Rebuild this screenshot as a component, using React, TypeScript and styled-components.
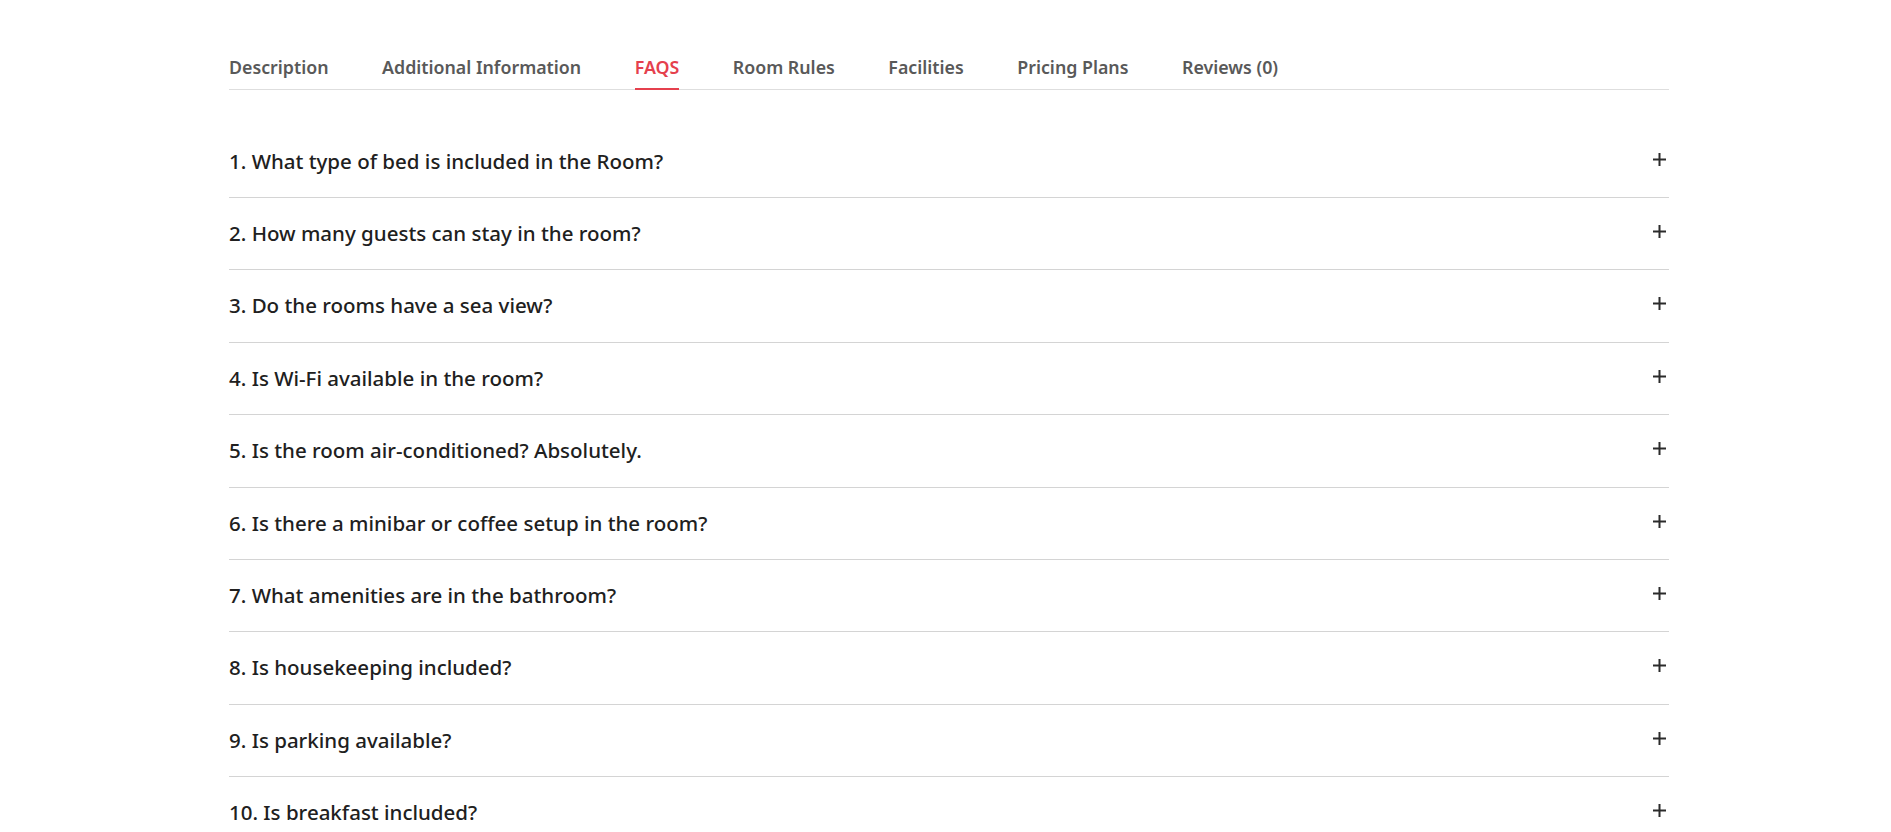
import React, { useState } from "react";
import styled, { createGlobalStyle } from "styled-components";

const GlobalStyle = createGlobalStyle`
  html, body { margin: 0; padding: 0; background: #ffffff; }
  body { font-family: "Noto Sans", "Open Sans", sans-serif; }
  * { box-sizing: border-box; }
`;

const Page = styled.main`
  display: flex;
  flex-direction: column;
  width: 1440px;
  margin-left: 229px;
  padding-top: 55px;
`;

const TabList = styled.nav`
  display: flex;
  gap: 53.5px;
  border-bottom: 1px solid #dedede;
`;

const Tab = styled.button<{ $active?: boolean }>`
  appearance: none;
  background: none;
  border: none;
  border-bottom: 2px solid ${(p) => (p.$active ? "#e5404d" : "transparent")};
  margin: 0 0 -1px 0;
  padding: 0 0 9px 0;
  font-family: "Noto Sans", "Open Sans", sans-serif;
  font-size: 17.8px;
  line-height: 24px;
  font-weight: 600;
  color: ${(p) => (p.$active ? "#e5404d" : "#595959")};
  cursor: pointer;
`;

const Accordion = styled.section`
  display: flex;
  flex-direction: column;
  margin-top: 35.6px;
`;

const Item = styled.div`
  border-bottom: 1px solid #d4d4d4;
`;

const Question = styled.button`
  appearance: none;
  background: none;
  border: none;
  width: 100%;
  display: flex;
  align-items: flex-start;
  justify-content: space-between;
  padding: 22px 0;
  text-align: left;
  cursor: pointer;
`;

const QuestionText = styled.span`
  font-family: "Noto Sans", "Open Sans", sans-serif;
  font-size: 20.5px;
  line-height: 27.4px;
  font-weight: 500;
  color: #202020;
`;

const PlusIcon = styled.svg`
  width: 13px;
  height: 13px;
  margin-top: 5px;
  margin-right: 3px;
  flex-shrink: 0;
`;

const Answer = styled.p`
  margin: 0 0 22px;
  font-family: "Noto Sans", "Open Sans", sans-serif;
  font-size: 16px;
  line-height: 26px;
  color: #666;
`;

const tabs = [
  "Description",
  "Additional Information",
  "FAQS",
  "Room Rules",
  "Facilities",
  "Pricing Plans",
  "Reviews (0)",
];

const faqs = [
  "1. What type of bed is included in the Room?",
  "2. How many guests can stay in the room?",
  "3. Do the rooms have a sea view?",
  "4. Is Wi-Fi available in the room?",
  "5. Is the room air-conditioned? Absolutely.",
  "6. Is there a minibar or coffee setup in the room?",
  "7. What amenities are in the bathroom?",
  "8. Is housekeeping included?",
  "9. Is parking available?",
  "10. Is breakfast included?",
];

export default function App() {
  const [active, setActive] = useState("FAQS");
  const [open, setOpen] = useState<number | null>(null);
  return (
    <>
      <GlobalStyle />
      <Page>
        <TabList>
          {tabs.map((t) => (
            <Tab key={t} $active={t === active} onClick={() => setActive(t)}>
              {t}
            </Tab>
          ))}
        </TabList>
        <Accordion>
          {faqs.map((q, i) => (
            <Item key={q}>
              <Question onClick={() => setOpen(open === i ? null : i)}>
                <QuestionText>{q}</QuestionText>
                <PlusIcon viewBox="0 0 13 13">
                  <rect x="0" y="5.5" width="13" height="2" fill="#2b2b2b" />
                  {open !== i && <rect x="5.5" y="0" width="2" height="13" fill="#2b2b2b" />}
                </PlusIcon>
              </Question>
              {open === i && <Answer>Details coming soon.</Answer>}
            </Item>
          ))}
        </Accordion>
      </Page>
    </>
  );
}
